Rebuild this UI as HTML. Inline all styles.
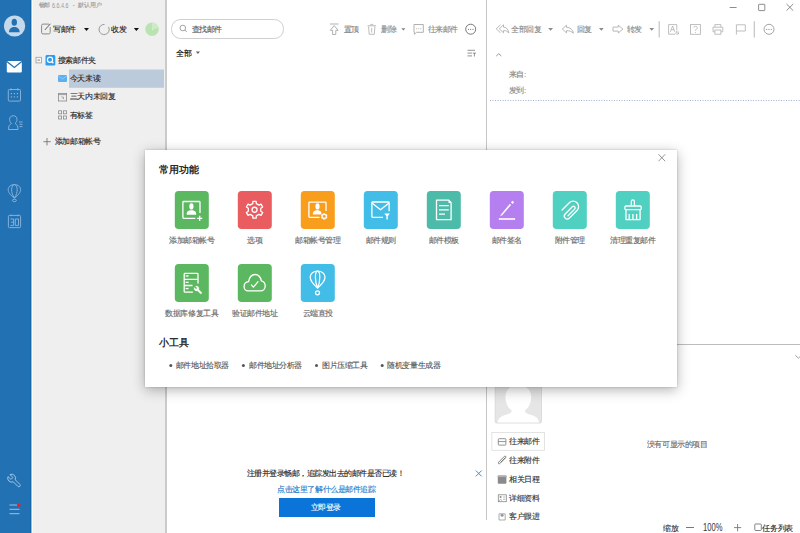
<!DOCTYPE html>
<html><head><meta charset="utf-8">
<style>
*{margin:0;padding:0;box-sizing:border-box}
html,body{width:800px;height:533px;overflow:hidden;background:#fff;font-family:"Liberation Sans",sans-serif;position:relative}
.a{position:absolute}
.t{position:absolute;white-space:nowrap;font-size:8px;line-height:8px;letter-spacing:-0.43px;color:#222;-webkit-text-stroke:0.12px currentColor}
svg{position:absolute;overflow:visible}
.lb{width:120px;text-align:center;color:#666}
</style></head><body>

<!-- left sidebar -->
<div class="a" style="left:0;top:0;width:31px;height:533px;background:#2272b3"></div>
<div class="a" style="left:30px;top:0;width:1px;height:533px;background:#1466ab"></div>
<div class="a" style="left:31px;top:0;width:1px;height:533px;background:#9dbcd9"></div>
<div class="a" style="left:32px;top:0;width:1px;height:533px;background:#fdfaf4"></div>

<!-- folder panel -->
<div class="a" style="left:33px;top:0;width:132px;height:533px;background:#efefef"></div>
<div class="a" style="left:165px;top:0;width:2px;height:533px;background:#cbcbcb"></div>

<!-- mail list / reading pane divider -->
<div class="a" style="left:486px;top:0;width:1px;height:520px;background:#c6c6c6"></div>

<!-- title -->
<div class="t" style="left:38.5px;top:2px;font-size:6px;line-height:6px;letter-spacing:-0.2px;color:#9a9a9a">畅邮</div>
<div class="t" style="left:52px;top:1.6px;font-size:7.5px;line-height:7.5px;letter-spacing:0;color:#9a9a9a;-webkit-text-stroke:0;transform:scaleX(0.72);transform-origin:0 0">6.6.4.6</div>
<div class="t" style="left:72.6px;top:1.3px;font-size:7px;line-height:7px;color:#9a9a9a;-webkit-text-stroke:0">-</div>
<div class="t" style="left:78px;top:2px;font-size:6px;line-height:6px;letter-spacing:-0.1px;color:#9a9a9a">默认用户</div>


<!-- base svg (page coordinates) -->
<svg width="800" height="533" style="left:0;top:0" viewBox="0 0 800 533">
 <!-- avatar -->
 <circle cx="14.6" cy="26" r="10.6" fill="#c5d9ec"/>
 <ellipse cx="14.3" cy="22.3" rx="2.7" ry="3.5" fill="#2272b3"/>
 <path d="M9 32.2 C9 28.5 11.5 27 14.3 27 C17.1 27 19.6 28.5 19.6 32.2 Z" fill="#2272b3"/>
 <!-- mail filled -->
 <rect x="6.8" y="61" width="15" height="11.4" rx="0.8" fill="#fff"/>
 <path d="M6.8 61.6 L14.3 67.4 L21.8 61.6" fill="none" stroke="#2272b3" stroke-width="1.3"/>
 <!-- calendar -->
 <g fill="none" stroke="#8fb7dc" stroke-width="0.9">
  <rect x="8.3" y="89.5" width="12.2" height="11.6" rx="1"/>
  <line x1="11" y1="88.3" x2="11" y2="90.5"/><line x1="17.8" y1="88.3" x2="17.8" y2="90.5"/>
 </g>
 <g fill="#8fb7dc">
  <rect x="10.8" y="93" width="1.2" height="1.2"/><rect x="13.8" y="93" width="1.2" height="1.2"/><rect x="16.8" y="93" width="1.2" height="1.2"/>
  <rect x="10.8" y="96.3" width="1.2" height="1.2"/><rect x="13.8" y="96.3" width="1.2" height="1.2"/><rect x="16.8" y="96.3" width="1.2" height="1.2"/>
 </g>
 <!-- contacts -->
 <g fill="none" stroke="#8fb7dc" stroke-width="0.9">
  <path d="M8.5 129.5 L18 129.5 C18 125.5 16.5 124.2 15 123.5 C16.6 122.3 17 120.8 17 119.3 C17 117 15.5 115.8 13.3 115.8 C11 115.8 9.6 117 9.6 119.3 C9.6 120.8 10 122.3 11.6 123.5 C10 124.2 8.5 125.5 8.5 129.5 Z"/>
  <line x1="19" y1="122" x2="22.5" y2="122"/><line x1="19.5" y1="124.3" x2="22.5" y2="124.3"/><line x1="19.5" y1="126.6" x2="22.5" y2="126.6"/>
 </g>
 <!-- balloon -->
 <g fill="none" stroke="#8fb7dc" stroke-width="0.9">
  <path d="M14.4 198 C10 195 8.2 192 8.2 189.8 C8.2 186.5 11 184.6 14.4 184.6 C17.8 184.6 20.6 186.5 20.6 189.8 C20.6 192 18.8 195 14.4 198 Z"/>
  <path d="M14.4 198 C12.3 195 11.6 192 11.6 189.8 C11.6 186.8 12.8 184.6 14.4 184.6 C16 184.6 17.2 186.8 17.2 189.8 C17.2 192 16.5 195 14.4 198 Z"/>
  <ellipse cx="14.4" cy="200.4" rx="2" ry="1.2"/>
 </g>
 <!-- 30 calendar -->
 <g fill="none" stroke="#8fb7dc" stroke-width="0.9">
  <rect x="8.4" y="215.4" width="12.2" height="12.2" rx="1"/>
  <line x1="11" y1="214.6" x2="11" y2="216.2"/><line x1="18" y1="214.6" x2="18" y2="216.2"/>
 </g>
 <path d="M10.4 219 L13.6 219 L13.6 225.4 L10.4 225.4 M11 222.2 L13.6 222.2 M15.3 219 L18.5 219 L18.5 225.4 L15.3 225.4 Z" fill="none" stroke="#8fb7dc" stroke-width="0.9"/>
 <!-- wrench -->
 <path transform="translate(22.2 472.9) scale(-0.66 0.66)" d="M14.7 6.3a1 1 0 0 0 0 1.4l1.6 1.6a1 1 0 0 0 1.4 0l3.77-3.77a6 6 0 0 1-7.94 7.94l-6.91 6.91a2.12 2.12 0 0 1-3-3l6.91-6.91a6 6 0 0 1 7.94-7.94l-3.76 3.76z" fill="none" stroke="#a9c8e6" stroke-width="1.45" stroke-linejoin="round"/>
 <!-- menu -->
 <g stroke="#a9c8e6" stroke-width="0.9">
  <line x1="9.5" y1="505" x2="17" y2="505"/><line x1="9.5" y1="509.3" x2="19.5" y2="509.3"/><line x1="9.5" y1="513.7" x2="19.5" y2="513.7"/>
 </g>
 <circle cx="18.8" cy="505" r="1.8" fill="#e8202a"/>
</svg>

<!-- folder toolbar -->
<svg width="800" height="533" style="left:0;top:0" viewBox="0 0 800 533">
 <path d="M49 24.1 L43 24.1 Q41.6 24.1 41.6 25.5 L41.6 32.5 Q41.6 33.9 43 33.9 L48.8 33.9 Q50.2 33.9 50.2 32.5 L50.2 27" fill="none" stroke="#8a8a8a" stroke-width="1"/>
 <line x1="44.8" y1="30" x2="50.4" y2="23.8" stroke="#666" stroke-width="1"/>
 <path d="M84 28.1 L89 28.1 L86.5 30.9 Z" fill="#111"/>
 <path d="M108.52 26.95 A5.1 5.1 0 1 1 104.54 24.42" fill="none" stroke="#999" stroke-width="1"/>
 <path d="M133.8 28.1 L139 28.1 L136.4 31 Z" fill="#111"/>
 <circle cx="152" cy="29.2" r="6.7" fill="#b9e3b1"/>
 <path d="M152 29.2 L152 22.5 A6.7 6.7 0 0 1 158.5 28 Z" fill="#cdebc6"/>
 <line x1="152" y1="29.6" x2="153.3" y2="29.6" stroke="#fff" stroke-width="0.6"/>
 <!-- tree -->
 <rect x="36" y="57.3" width="5.4" height="5.6" fill="#f7f7f7" stroke="#9a9a9a" stroke-width="0.8"/>
 <line x1="37.4" y1="60.1" x2="40" y2="60.1" stroke="#666" stroke-width="0.8"/>
 <rect x="45.5" y="55" width="9.8" height="10.6" rx="1.4" fill="#2d9bf0"/>
 <circle cx="50" cy="59.8" r="2.6" fill="none" stroke="#fff" stroke-width="1.2"/>
 <line x1="51.8" y1="61.6" x2="53.4" y2="63.3" stroke="#fff" stroke-width="1.3"/>
 <rect x="69" y="69.5" width="95" height="18.3" fill="#bccbdb"/>
 <rect x="58" y="75.1" width="9" height="7" rx="1" fill="#5cb0f0"/>
 <path d="M58 75.6 L62.5 79 L67 75.6" fill="none" stroke="#9dd0f7" stroke-width="0.8"/>
 <g fill="none" stroke="#8a8a8a" stroke-width="0.8">
  <rect x="58.4" y="93.4" width="8.2" height="7.6"/>
  <line x1="58.4" y1="94.6" x2="66.6" y2="94.6"/>
  <path d="M61 97 L63.5 97 L63.5 99 M62.5 98 L63.6 99.2" stroke-width="0.6"/>
  <rect x="58.6" y="110.8" width="3" height="3"/><rect x="63.4" y="110.8" width="3" height="3"/>
  <rect x="58.6" y="116" width="3" height="3"/><rect x="63.4" y="116" width="3" height="3"/>
 </g>
 <g stroke="#555" stroke-width="0.9">
  <line x1="43.4" y1="141.7" x2="50.7" y2="141.7" stroke="#777"/><line x1="47" y1="138" x2="47" y2="145.4" stroke="#777"/>
 </g>
</svg>
<div class="t" style="left:53.3px;top:26px">写邮件</div>
<div class="t" style="left:111.4px;top:26px">收发</div>
<div class="t" style="left:57.9px;top:56.8px">搜索邮件夹</div>
<div class="t" style="left:69.9px;top:74.8px">今天未读</div>
<div class="t" style="left:69.9px;top:92.9px">三天内未回复</div>
<div class="t" style="left:69.9px;top:111.5px">有标签</div>
<div class="t" style="left:54.8px;top:138px">添加邮箱帐号</div>

<!-- mail list header -->
<div class="a" style="left:171.4px;top:19.4px;width:112.4px;height:19.2px;border:1px solid #cfcfcf;border-radius:9.6px"></div>
<svg width="800" height="533" style="left:0;top:0" viewBox="0 0 800 533">
 <circle cx="182.8" cy="28" r="2.8" fill="none" stroke="#9a9a9a" stroke-width="0.9"/>
 <line x1="184.8" y1="30" x2="186.6" y2="31.9" stroke="#9a9a9a" stroke-width="1"/>
 <path d="M195.8 51.6 L200 51.6 L197.9 54 Z" fill="#666"/>
 <!-- 置顶 -->
 <g fill="none" stroke="#a8a8a8" stroke-width="0.9">
  <line x1="330" y1="24" x2="338.5" y2="24"/>
  <path d="M334.2 25.6 L330.3 30.3 L332.6 30.3 L332.6 34.5 L335.8 34.5 L335.8 30.3 L338.1 30.3 Z"/>
 </g>
 <!-- trash -->
 <g fill="none" stroke="#b4b4b4" stroke-width="0.9">
  <line x1="367.5" y1="25.8" x2="376" y2="25.8"/>
  <path d="M370.3 25.6 L370.8 24.4 L372.7 24.4 L373.2 25.6"/>
  <path d="M368.6 26.5 L369.2 34.3 L374.3 34.3 L374.9 26.5"/>
  <line x1="371.7" y1="28" x2="371.7" y2="32.5"/>
 </g>
 <path d="M401.4 28.2 L405.4 28.2 L403.4 30.5 Z" fill="#808080"/>
 <!-- chat -->
 <g fill="none" stroke="#a8a8a8" stroke-width="0.9">
  <path d="M414 24.5 L423.3 24.5 L423.3 32.3 L416.5 32.3 L414.4 34.3 L414.4 32.3 L414 32.3 Z"/>
 </g>
 <g fill="#a8a8a8"><rect x="416.2" y="28.3" width="0.9" height="0.9"/><rect x="418.3" y="28.3" width="0.9" height="0.9"/><rect x="420.4" y="28.3" width="0.9" height="0.9"/></g>
 <!-- more -->
 <circle cx="470.7" cy="29.2" r="5" fill="none" stroke="#6a6a6a" stroke-width="0.9"/>
 <g fill="#555"><circle cx="468.4" cy="29.3" r="0.55"/><circle cx="470.7" cy="29.3" r="0.55"/><circle cx="473" cy="29.3" r="0.55"/></g>
 <!-- sort -->
 <g stroke="#777" stroke-width="0.8">
  <line x1="467.5" y1="50.3" x2="475" y2="50.3"/>
  <line x1="467.5" y1="53.1" x2="472" y2="53.1"/>
  <line x1="467.5" y1="55.9" x2="472" y2="55.9"/>
  <line x1="472.8" y1="53.1" x2="476" y2="53.1"/>
  <line x1="474.4" y1="53.1" x2="474.4" y2="56.5"/>
 </g>
</svg>
<div class="t" style="left:191.6px;top:26.1px;color:#555">查找邮件</div>
<div class="t" style="left:176.3px;top:50px;color:#000;letter-spacing:0px">全部</div>
<div class="t" style="left:343.5px;top:26.1px;color:#7c7c7c">置顶</div>
<div class="t" style="left:381px;top:26.1px;color:#888">删除</div>
<div class="t" style="left:427.5px;top:26.1px;color:#888">往来邮件</div>

<!-- reading pane toolbar -->
<svg width="800" height="533" style="left:0;top:0" viewBox="0 0 800 533">
 <g fill="none" stroke="#b0b0b0" stroke-width="0.9" stroke-linejoin="round">
  <path d="M500.5 24.8 L496.2 28.8 L500.5 32.8"/>
  <path d="M503.5 24.8 L499.3 28.8 L503.5 32.8 L503.5 30.6 C506 30.4 507.8 31.4 508.8 33.1 C508.5 29.6 506.5 27.2 503.5 27.2 Z"/>
  <path d="M566.5 25.2 L562.3 29 L566.5 32.9 L566.5 30.7 C569.3 30.5 571.6 31.5 573.4 33.2 C572.8 29.7 570.3 27.3 566.5 27.3 Z"/>
  <path d="M613 27.1 L618.3 27.1 L618.3 25.2 L622.9 29.1 L618.3 33 L618.3 31.1 L613 31.1 Z"/>
 </g>
 <g fill="#8a8a8a">
  <path d="M548.2 28 L553 28 L550.6 30.8 Z"/>
  <path d="M599 28 L603.7 28 L601.35 30.8 Z"/>
  <path d="M649.4 28 L654.1 28 L651.75 30.8 Z"/>
 </g>
 <rect x="658.6" y="21.2" width="1.2" height="16.3" fill="#c4c4c4"/>
 <rect x="753.7" y="21.2" width="1.2" height="16.3" fill="#c4c4c4"/>
 <g fill="none" stroke="#b8b8b8" stroke-width="0.9">
  <path d="M676.8 30.5 L676.8 24.6 L668.6 24.6 L668.6 34.2 L675 34.2"/>
  <path d="M670.4 31.8 L672.6 26 L674.8 31.8 M671.2 29.8 L674 29.8"/>
  <circle cx="677.2" cy="33" r="1.2" stroke-width="1.4" stroke-dasharray="0.9 0.5"/>
  <rect x="690.5" y="24.6" width="9.9" height="9.7"/>
  <path d="M693.8 27.6 C693.8 26 697.3 26 697.3 27.6 C697.3 29 695.5 29.2 695.5 30.8"/>
  <path d="M714.9 27.2 L714.9 24.6 L720.9 24.6 L720.9 27.2"/>
  <path d="M714.9 31.8 L713 31.8 L713 27.2 L722.8 27.2 L722.8 31.8 L720.9 31.8"/>
  <rect x="714.9" y="30" width="6" height="4.2"/>
  <path d="M736.4 34.6 L736.4 24.8 L745.3 24.8 L745.3 31 L736.4 31"/>
 </g>
 <circle cx="695.5" cy="32.4" r="0.5" fill="#b8b8b8"/>
 <circle cx="769" cy="29.3" r="5" fill="none" stroke="#9a9a9a" stroke-width="0.9"/>
 <g fill="#8a8a8a"><circle cx="766.7" cy="29.4" r="0.55"/><circle cx="769" cy="29.4" r="0.55"/><circle cx="771.3" cy="29.4" r="0.55"/></g>
 <!-- window controls -->
 <g fill="none" stroke="#707070" stroke-width="0.8">
  <line x1="729.7" y1="7.5" x2="736.6" y2="7.5"/>
  <rect x="758.6" y="4.3" width="6.2" height="6.3" rx="0.6"/>
  <path d="M786.5 4 L793.2 10.6 M793.2 4 L786.5 10.6"/>
 </g>
 <!-- caret ^ -->
 <path d="M496.3 56 L498.8 53.7 L501.3 56" fill="none" stroke="#777" stroke-width="0.8"/>
 <!-- dotted line -->
 <line x1="490" y1="100.5" x2="800" y2="100.5" stroke="#9fb1cc" stroke-width="1" stroke-dasharray="1 1.53"/>
</svg>
<div class="t" style="left:511px;top:26.1px;color:#888">全部回复</div>
<div class="t" style="left:576.7px;top:26.1px;color:#888">回复</div>
<div class="t" style="left:626.9px;top:26.1px;color:#888">转发</div>
<div class="t" style="left:508.8px;top:70.6px;color:#858585">来自:</div>
<div class="t" style="left:508.8px;top:87px;color:#858585">发到:</div>


<!-- reading lower pane -->
<div class="a" style="left:487px;top:343.6px;width:313px;height:1px;background:#bdbdbd"></div>
<svg width="800" height="533" style="left:0;top:0" viewBox="0 0 800 533">
 <path d="M795.3 355.2 L798.4 358.2 L801.5 355.2" fill="none" stroke="#888" stroke-width="0.8"/>
 <!-- avatar placeholder -->
 <rect x="495.2" y="372" width="46.3" height="51" rx="1.5" fill="#e6e6e6" stroke="#d6d6d6" stroke-width="0.8"/>
 <path d="M497.6 422.6 C498.2 418.3 500.8 416.2 506 414.8 C509.6 414 511.4 412.8 511.8 410.6 C508.2 408.3 505.6 403.5 505.4 397 C505.2 390 510.5 385 518.3 385 C526 385 531.4 390 531.2 397 C531 403.5 528.4 408.3 524.8 410.6 C525.2 412.8 527 414 530.6 414.8 C535.8 416.2 538.4 418.3 539 422.6 Z" fill="#fff"/>
 <rect x="491.9" y="432.5" width="52.6" height="17.8" fill="#fff" stroke="#dcdcdc" stroke-width="0.8"/>
 <g fill="none" stroke="#555" stroke-width="0.9">
  <rect x="498.3" y="438.7" width="7.6" height="6.4" rx="0.8" stroke="#777" stroke-width="0.8"/>
  <line x1="498.3" y1="441.6" x2="505.9" y2="441.6" stroke="#777" stroke-width="0.8"/>
  <path d="M505.8 457.6 L500.2 463.3 C499 464.5 497.6 463.3 498.7 462.1 L504.4 456.3 C505.2 455.5 506.3 456.6 505.5 457.4 L500.6 462.4" stroke="#666" stroke-width="0.8"/>
  <rect x="498.3" y="494.8" width="8" height="6.9" stroke="#888" stroke-width="0.8"/>
  <path d="M499 513.8 L505.2 513.8 L505.2 520 L499 520 Z" stroke="#999" stroke-width="0.8"/>
 </g>
 <rect x="497.8" y="475.5" width="8.6" height="8.3" rx="0.8" fill="#8a8a8a"/>
 <rect x="497.8" y="475.5" width="8.6" height="1.6" fill="#b0b0b0"/>
 <circle cx="500.6" cy="497" r="1" fill="#888"/>
 <path d="M499.4 500.8 C499.6 499 501.6 499 501.8 500.8" fill="none" stroke="#888" stroke-width="0.6"/>
 <line x1="503" y1="497" x2="505.3" y2="497" stroke="#888" stroke-width="0.6"/>
 <line x1="503" y1="499.2" x2="505.3" y2="499.2" stroke="#888" stroke-width="0.6"/>
 <circle cx="502.1" cy="515.2" r="1.5" fill="#999"/>
</svg>
<div class="t" style="left:509px;top:437.8px;color:#333">往来邮件</div>
<div class="t" style="left:509px;top:456.9px;color:#333">往来附件</div>
<div class="t" style="left:509px;top:475.9px;color:#333">相关日程</div>
<div class="t" style="left:509px;top:494.9px;color:#333">详细资料</div>
<div class="a" style="left:487px;top:510px;width:80px;height:10px;overflow:hidden"><div class="t" style="left:22px;top:3.2px;color:#333">客户跟进</div></div>
<div class="t" style="left:646.9px;top:441.3px;color:#666">没有可显示的项目</div>

<!-- mail list bottom prompt -->
<div class="t" style="left:247px;top:470px;color:#222;letter-spacing:-0.52px">注册并登录畅邮，追踪发出去的邮件是否已读！</div>
<svg width="800" height="533" style="left:0;top:0" viewBox="0 0 800 533">
 <path d="M475.8 470.5 L481.7 476.4 M481.7 470.5 L475.8 476.4" stroke="#3a92d0" stroke-width="1"/>
</svg>
<div class="t" style="left:277.2px;top:486.2px;color:#1b78c8">点击这里了解什么是邮件追踪</div>
<div class="a" style="left:278.9px;top:498.2px;width:95.8px;height:18.7px;background:#0b74d9"></div>
<div class="t" style="left:310.7px;top:503.8px;color:#fff">立即登录</div>

<!-- status bar -->
<div class="t" style="left:663px;top:525px;color:#333">缩放</div>
<div class="a" style="left:686px;top:527.2px;width:7.6px;height:0.9px;background:#777"></div>
<div class="t" style="left:703.4px;top:523px;color:#333;font-size:10px;line-height:10px;letter-spacing:0;transform:scaleX(0.76);transform-origin:0 0;-webkit-text-stroke:0">100%</div>
<svg width="800" height="533" style="left:0;top:0" viewBox="0 0 800 533">
 <path d="M734 527.6 L741.2 527.6 M737.6 524 L737.6 531.3" stroke="#777" stroke-width="0.9"/>
 <rect x="754.8" y="524" width="6.5" height="6.5" rx="0.8" fill="#fff" stroke="#666" stroke-width="0.8"/>
</svg>
<div class="t" style="left:762.4px;top:525px;color:#222">任务列表</div>

<!-- dialog -->
<div class="a" style="left:145px;top:149.6px;width:532.3px;height:237.5px;background:#fff;box-shadow:0 2.5px 12px rgba(0,0,0,0.3),0 0 2px rgba(0,0,0,0.2)"></div>
<svg width="800" height="533" style="left:0;top:0" viewBox="0 0 800 533">
 <path d="M658.5 154.3 L665.2 161.2 M665.2 154.3 L658.5 161.2" stroke="#777" stroke-width="0.8" fill="none"/>
 <rect x="174.8" y="191" width="34" height="38" rx="3.8" fill="#5cb860"/><rect x="237.8" y="191" width="34" height="38" rx="3.8" fill="#e95c60"/><rect x="300.8" y="191" width="34" height="38" rx="3.8" fill="#f99d1c"/><rect x="363.8" y="191" width="34" height="38" rx="3.8" fill="#42bde8"/><rect x="426.8" y="191" width="34" height="38" rx="3.8" fill="#4dbba9"/><rect x="489.8" y="191" width="34" height="38" rx="3.8" fill="#b57ff0"/><rect x="552.8" y="191" width="34" height="38" rx="3.8" fill="#50d0c0"/><rect x="615.8" y="191" width="34" height="38" rx="3.8" fill="#50d0c0"/><rect x="174.8" y="264" width="34" height="38" rx="3.8" fill="#5cb860"/><rect x="237.8" y="264" width="34" height="38" rx="3.8" fill="#5cb860"/><rect x="300.8" y="264" width="34" height="38" rx="3.8" fill="#42bde8"/>
 <g fill="none" stroke="#fff" stroke-width="1.3" stroke-linejoin="round">
  <!-- add account -->
  <path d="M200 213 L200 202.3 Q200 201.5 199.2 201.5 L183.7 201.5 Q182.9 201.5 182.9 202.3 L182.9 217.5 Q182.9 218.3 183.7 218.3 L195.3 218.3"/>
  <path d="M197.1 218.4 L202.3 218.4 M199.7 215.8 L199.7 221"/>
  <!-- gear -->
  <path d="M252.79 203.61 L252.91 201.32 L256.19 201.32 L256.31 203.61 L259.00 205.16 L261.04 204.12 L262.68 206.96 L260.76 208.21 L260.76 211.31 L262.68 212.56 L261.04 215.40 L259.00 214.36 L256.31 215.91 L256.19 218.20 L252.91 218.20 L252.79 215.91 L250.10 214.36 L248.06 215.40 L246.42 212.56 L248.34 211.31 L248.34 208.21 L246.42 206.96 L248.06 204.12 L250.10 205.16 Z"/>
  <circle cx="254.55" cy="209.76" r="2.5"/>
  <!-- account manage -->
  <path d="M326 211 L326 202.9 Q326 202.1 325.2 202.1 L309.7 202.1 Q308.9 202.1 308.9 202.9 L308.9 216.6 Q308.9 217.4 309.7 217.4 L319.5 217.4"/>
  <path d="M323.58 214.60 L323.55 213.78 L324.85 213.78 L324.82 214.60 L325.45 214.97 L326.14 214.52 L326.80 215.66 L326.07 216.04 L326.07 216.76 L326.80 217.14 L326.14 218.28 L325.45 217.83 L324.82 218.20 L324.85 219.02 L323.55 219.02 L323.58 218.20 L322.95 217.83 L322.26 218.28 L321.60 217.14 L322.33 216.76 L322.33 216.04 L321.60 215.66 L322.26 214.52 L322.95 214.97 Z" stroke-width="1.1"/>
  <!-- rules mail -->
  <path d="M389.1 211.2 L389.1 202.8 Q389.1 202 388.3 202 L372.7 202 Q371.9 202 371.9 202.8 L371.9 216.6 Q371.9 217.4 372.7 217.4 L383 217.4"/>
  <path d="M372.3 203.2 L380.5 209.8 L388.7 203.2"/>
  <!-- template doc -->
  <path d="M448.8 200.1 L436.5 200.1 L436.5 219.7 L451.1 219.7 L451.1 202.6 Z"/>
  <path d="M439 205.7 L448.8 205.7 M439 209.9 L448.8 209.9 M439 214.1 L445 214.1"/>
  <!-- sign -->
  <path d="M498.8 219 L515.1 219" stroke-width="1.6"/>
  <!-- paperclip -->
  <path transform="translate(570.2 209.6) rotate(45) scale(1.1)" stroke-width="1.2" d="M-4.95 5.5 L-4.95 -3.8 A4.95 4.95 0 0 1 4.95 -3.8 L4.95 6 A2.7 2.7 0 0 1 -0.45 6 L-0.45 -3.2 A1.5 1.5 0 0 1 2.55 -3.2 L2.55 5.3" stroke-linecap="round"/>
  <!-- brush -->
  <path d="M631.3 205.5 L631.3 201.4 A1.55 1.55 0 0 1 634.4 201.4 L634.4 205.5"/>
  <rect x="624.9" y="206" width="16.3" height="3.7" rx="1.2"/>
  <path d="M626 209.8 L626 219.6 L640.1 219.6 L640.1 209.8"/>
  <path d="M629.2 214 L629.2 219.6 M632.9 214 L632.9 219.6 M636.6 214 L636.6 219.6"/>
  <!-- database -->
  <path d="M198 283.5 L198 274.2 Q198 273.4 197.2 273.4 L185 273.4 Q184.2 273.4 184.2 274.2 L184.2 291.4 Q184.2 292.2 185 292.2 L192.9 292.2"/>
  <path d="M184.2 279.3 L198 279.3 M184.2 285.5 L192.5 285.5"/>
  <!-- cloud -->
  <path d="M248.2 290.9 C245.5 290.9 244.1 288.6 244.1 286.4 C244.1 283.8 246 282 248.6 281.7 C249.3 277.5 251.8 274.5 255 274.5 C258.3 274.5 260.6 277.3 261.3 280.8 C263.6 281.3 265.2 283.6 265.2 286 C265.2 288.8 263.2 290.9 260.5 290.9 Z"/>
  <path d="M251.1 284.6 L253.4 287.1 L258.3 281.4"/>
  <!-- balloon -->
  <path d="M317.6 288 C313.5 284.5 310.2 281 310.2 277 C310.2 273.3 313.6 271.1 317.6 271.1 C321.6 271.1 325 273.3 325 277 C325 281 321.7 284.5 317.6 288 Z"/>
  <path d="M317.6 288 C316 284.3 315.4 280.5 315.4 277.2 C315.4 273.7 316.3 271.2 317.6 271.1 C318.9 271.2 319.8 273.7 319.8 277.2 C319.8 280.5 319.2 284.3 317.6 288 Z"/>
  <circle cx="317.5" cy="292.8" r="2"/>
 </g>
 <g fill="#fff">
  <ellipse cx="191.4" cy="206.4" rx="2.1" ry="3.1"/>
  <path d="M186.7 214.7 L196.1 214.7 L196.1 213.6 C196.1 211.6 194.5 210.6 192.8 210.2 L190 210.2 C188.3 210.6 186.7 211.6 186.7 213.6 Z"/>
  <ellipse cx="317.5" cy="206.4" rx="2.1" ry="3.1"/>
  <path d="M312.9 214.5 L321.5 214.5 L321.5 213.5 C321.5 211.6 320 210.6 318.4 210.2 L316.2 210.2 C314.5 210.6 312.9 211.6 312.9 213.5 Z"/>
  <path d="M384.3 213.6 L389.9 213.6 L387.8 216.2 L387.8 219.5 L386.4 219.5 L386.4 216.2 Z"/>
  <path d="M448.5 200 L451.5 203 L448.5 203 Z"/>
  <path d="M500.2 216.3 L501.2 214.2 L509.9 203.7 L511.1 204.9 L502.2 215.2 Z"/>
  <rect x="511.4" y="201.2" width="2.3" height="2.3" transform="rotate(45 512.55 202.35)"/>
  <rect x="185.6" y="275.3" width="3" height="1.3"/>
  <rect x="185.6" y="281.7" width="3" height="1.3"/>
  <rect x="185.6" y="287.9" width="3" height="1.3"/>
 </g>
 <path transform="translate(202.9 285.3) scale(-0.4 0.4)" d="M14.7 6.3a1 1 0 0 0 0 1.4l1.6 1.6a1 1 0 0 0 1.4 0l3.77-3.77a6 6 0 0 1-7.94 7.94l-6.91 6.91a2.12 2.12 0 0 1-3-3l6.91-6.91a6 6 0 0 1 7.94-7.94l-3.76 3.76z" fill="#fff" stroke="#fff" stroke-width="1"/>
</svg>
<div class="t" style="left:158.6px;top:165px;font-size:10px;line-height:10px;letter-spacing:0.25px;color:#111;-webkit-text-stroke:0.3px #111">常用功能</div>
<div class="t" style="left:158.9px;top:338.3px;font-size:10px;line-height:10px;letter-spacing:0.1px;color:#111;-webkit-text-stroke:0.3px #111">小工具</div>
<div class="t lb" style="left:131.8px;top:237.4px">添加邮箱帐号</div>
<div class="t lb" style="left:194.8px;top:237.4px">选项</div>
<div class="t lb" style="left:257.8px;top:237.4px">邮箱帐号管理</div>
<div class="t lb" style="left:320.8px;top:237.4px">邮件规则</div>
<div class="t lb" style="left:383.8px;top:237.4px">邮件模板</div>
<div class="t lb" style="left:446.8px;top:237.4px">邮件签名</div>
<div class="t lb" style="left:509.8px;top:237.4px">附件管理</div>
<div class="t lb" style="left:572.8px;top:237.4px">清理重复邮件</div>
<div class="t lb" style="left:131.8px;top:310px">数据库修复工具</div>
<div class="t lb" style="left:194.8px;top:310px">验证邮件地址</div>
<div class="t lb" style="left:257.8px;top:310px">云端直投</div>


<!-- small tools -->
<svg width="800" height="533" style="left:0;top:0" viewBox="0 0 800 533">
 <g fill="#555"><circle cx="170.8" cy="365.4" r="1.5"/><circle cx="243.4" cy="365.4" r="1.5"/><circle cx="316.5" cy="365.4" r="1.5"/><circle cx="382.2" cy="365.4" r="1.5"/></g>
</svg>
<div class="t" style="left:175.8px;top:361.7px;color:#555">邮件地址拾取器</div>
<div class="t" style="left:249px;top:361.7px;color:#555">邮件地址分析器</div>
<div class="t" style="left:322px;top:361.7px;color:#555">图片压缩工具</div>
<div class="t" style="left:387.3px;top:361.7px;color:#555">随机变量生成器</div>
<!--END-->
</body></html>
